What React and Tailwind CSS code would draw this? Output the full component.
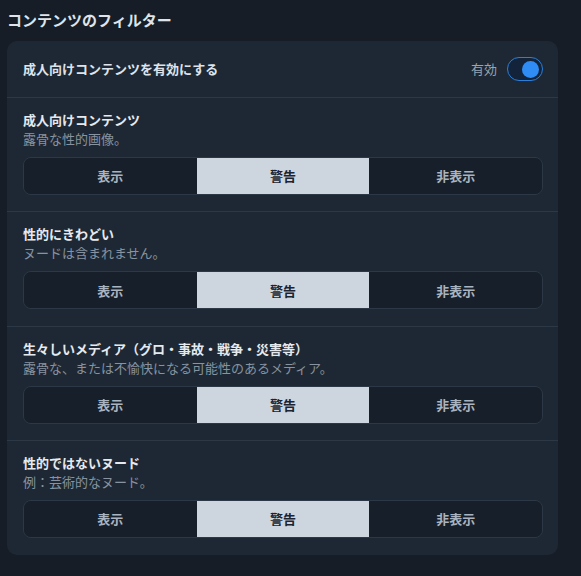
import React, { useState } from "react";

const font = "font-['Noto_Sans_CJK_JP','Noto_Sans',sans-serif]";

const SECTIONS = [
  { title: "成人向けコンテンツ", desc: "露骨な性的画像。" },
  { title: "性的にきわどい", desc: "ヌードは含まれません。" },
  {
    title: "生々しいメディア（グロ・事故・戦争・災害等）",
    desc: "露骨な、または不愉快になる可能性のあるメディア。",
  },
  { title: "性的ではないヌード", desc: "例：芸術的なヌード。" },
];

const OPTIONS = ["表示", "警告", "非表示"];

const Segmented = ({ value, onChange }) => (
  <div className="mt-[9px] flex h-[38px] rounded-lg border border-[#2c3845] overflow-hidden">
    {OPTIONS.map((opt) => {
      const active = value === opt;
      return (
        <button
          key={opt}
          onClick={() => onChange(opt)}
          className={`flex-1 text-[13px] font-semibold ${
            active ? "bg-[#cdd5de] text-[#1b2430]" : "bg-[#17202a] text-[#a9b4c0]"
          }`}
        >
          {opt}
        </button>
      );
    })}
  </div>
);

const Section = ({ title, desc, last }) => {
  const [value, setValue] = useState("警告");
  return (
    <div
      className={`pl-4 pr-[15px] pt-3 pb-[16.4px] ${
        last ? "" : "border-b border-[#2c3845]"
      }`}
    >
      <p className="text-[13px] font-semibold leading-[19px] text-[#e6eaee]">{title}</p>
      <p className="text-[13px] leading-[19px] text-[#8793a0]">{desc}</p>
      <Segmented value={value} onChange={setValue} />
    </div>
  );
};

export default function App() {
  const [enabled, setEnabled] = useState(true);
  return (
    <div className={`min-h-[576px] bg-[#161d26] px-[7px] pt-[9px] ${font}`}>
      <h2 className="text-[15px] font-semibold leading-[22px] text-[#dfe4ea]">
        コンテンツのフィルター
      </h2>
      <div className="mt-[10px] w-[551px] rounded-[10px] bg-[#1e2834]">
        <div className="flex h-[57px] items-center justify-between pl-4 pr-[15px] border-b border-[#2c3845]">
          <p className="text-[13px] font-semibold text-[#dfe4ea]">成人向けコンテンツを有効にする</p>
          <div className="flex items-center gap-[10px]">
            <span className="text-[13px] text-[#9aa5b1]">有効</span>
            <button
              onClick={() => setEnabled(!enabled)}
              className={`relative flex h-[24px] w-[36px] items-center rounded-full border border-[#2a7fdc] bg-[#13243a] px-[3px] ${
                enabled ? "justify-end" : "justify-start"
              }`}
            >
              <span className="h-[17px] w-[17px] rounded-full bg-[#2f8cf5]" />
            </button>
          </div>
        </div>
        {SECTIONS.map((s, i) => (
          <Section key={s.title} title={s.title} desc={s.desc} last={i === SECTIONS.length - 1} />
        ))}
      </div>
    </div>
  );
}
